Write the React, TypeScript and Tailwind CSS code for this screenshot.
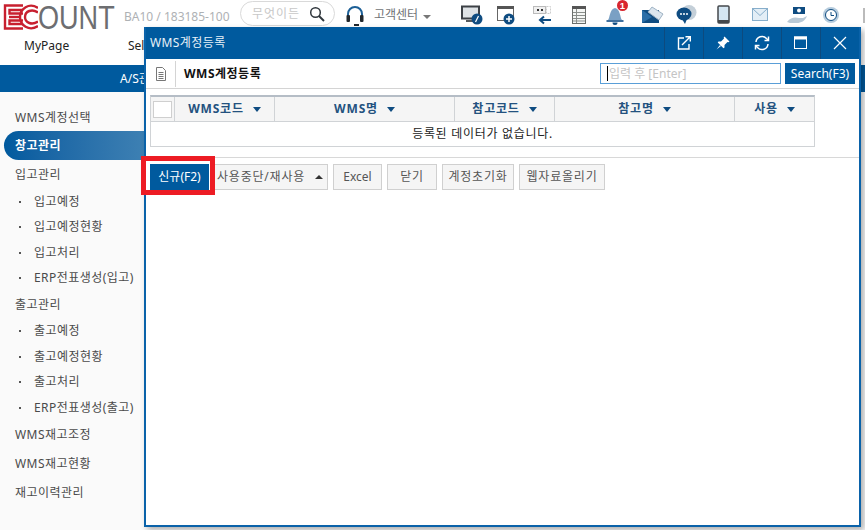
const font = "font-['Noto_Sans','Noto_Sans_CJK_KR',sans-serif]";

const menu: { label: string; kind: "top" | "active" | "head" | "sub" }[] = [
  { label: "WMS계정선택", kind: "top" },
  { label: "창고관리", kind: "active" },
  { label: "입고관리", kind: "head" },
  { label: "입고예정", kind: "sub" },
  { label: "입고예정현황", kind: "sub" },
  { label: "입고처리", kind: "sub" },
  { label: "ERP전표생성(입고)", kind: "sub" },
  { label: "출고관리", kind: "head" },
  { label: "출고예정", kind: "sub" },
  { label: "출고예정현황", kind: "sub" },
  { label: "출고처리", kind: "sub" },
  { label: "ERP전표생성(출고)", kind: "sub" },
  { label: "WMS재고조정", kind: "top" },
  { label: "WMS재고현황", kind: "top" },
  { label: "재고이력관리", kind: "top" },
];

const columns = ["WMS코드", "WMS명", "참고코드", "참고명", "사용"];
const buttons = ["Excel", "닫기", "계정초기화", "웹자료올리기"];

function Logo() {
  return (
    <div className="flex h-[30px] w-[120px] items-start">
      <svg width="38" height="30" viewBox="0 0 38 30" className="block shrink-0">
        <g fill="none" stroke="#c8202f" strokeWidth="2.400">
          <path d="M23 5.500H5V28.500H23" />
          <path d="M23 10H9.500V13.500H23" />
          <path d="M23 24H9.500V20.500H23" />
          <path d="M9 17H19" />
          <path d="M38 8C29 2 20 9 20 17S29 32 38 26" />
          <path d="M38 12.500C32 8.500 25 11 25 17S32 25.500 38 21.500" />
        </g>
      </svg>
      <span className="mt-[1px] inline-block origin-left scale-x-[0.82] font-['Liberation_Sans',sans-serif] text-[33px] leading-[33px] text-[#6d6e71]">
        OUNT
      </span>
    </div>
  );
}

function TopIcons() {
  return (
    <div className="absolute left-[460px] top-0 h-[27px] w-[405px]">
      <svg width="405" height="27" viewBox="0 0 405 27" className="block">
        {/* monitor */}
        <rect x="2" y="6.500" width="17" height="12" fill="#dfe3e6" stroke="#3d4146" strokeWidth="2" />
        <path d="M6 21H15" stroke="#55595d" strokeWidth="2" />
        <circle cx="17" cy="19" r="5.500" fill="#0f4c81" />
        <path d="M18.500 16L15.500 22" stroke="#fff" strokeWidth="1.200" />
        {/* new window */}
        <rect x="37.500" y="6.500" width="16" height="14" fill="#fff" stroke="#666" />
        <rect x="37" y="6" width="17" height="3" fill="#555" />
        <circle cx="49" cy="19" r="5.500" fill="#0f4c81" />
        <path d="M46 19H52M49 16V22" stroke="#fff" strokeWidth="1.500" />
        {/* move back */}
        <rect x="73.500" y="6.500" width="12" height="7" fill="#f0f0f0" stroke="#bbb" />
        <rect x="77" y="9" width="2" height="2" fill="#333" />
        <rect x="81" y="9" width="2" height="2" fill="#333" />
        <rect x="86.500" y="6.500" width="4" height="7" fill="#fff" stroke="#ccc" strokeDasharray="2 1" />
        <path d="M91 20H80M84 16.500L80 20L84 23.500" fill="none" stroke="#0f4c81" strokeWidth="2" />
        {/* sheet */}
        <rect x="112.500" y="6.500" width="13" height="17" fill="#f4f6f4" stroke="#6b6f6c" />
        <rect x="112" y="6" width="14" height="3" fill="#555" />
        <path d="M116.500 9V23M113 12.500H125M113 15.500H125M113 18.500H125M113 21H125" stroke="#8a8e8b" />
        {/* bell */}
        <path d="M148 20C150 18 149.500 9 155 8C160.500 9 160 18 162 20Z" fill="#7aa0c4" />
        <rect x="146.500" y="20" width="17" height="2" fill="#3f6f9d" />
        <path d="M152.500 22.500A2.500 2.500 0 0 0 157.500 22.500Z" fill="#0f4c81" />
        <circle cx="162.500" cy="5.500" r="5.500" fill="#d8262f" />
        <text x="162.500" y="9" textAnchor="middle" fontFamily="Liberation Sans" fontWeight="700" fontSize="9.500" fill="#fff">1</text>
        {/* envelope tag */}
        <path d="M182 10H199V23H182Z" fill="#0f4c81" />
        <path d="M182 10L192 17L182 23Z" fill="#2b6ea7" />
        <path d="M192 7L203 14L199 20L188 12Z" fill="#dbe5ee" stroke="#9fb3c4" />
        {/* chat */}
        <circle cx="229" cy="12.500" r="7.500" fill="#c4cfd8" />
        <ellipse cx="224" cy="14" rx="7.500" ry="6.500" fill="#0f4c81" />
        <path d="M222 19L225 24L227 19Z" fill="#0f4c81" />
        <circle cx="221" cy="14" r="1" fill="#fff" />
        <circle cx="224" cy="14" r="1" fill="#fff" />
        <circle cx="227" cy="14" r="1" fill="#fff" />
        {/* phone */}
        <rect x="258" y="6" width="11" height="17" rx="1" fill="#d5e6f2" stroke="#44484c" strokeWidth="1.500" />
        <rect x="258" y="20" width="11" height="3" fill="#44484c" />
        {/* mail */}
        <rect x="292.500" y="8.500" width="15" height="12" fill="#e3eef6" stroke="#87aecb" />
        <path d="M292.500 8.500L300 15.500L307.500 8.500" fill="none" stroke="#87aecb" />
        {/* money hand */}
        <rect x="333" y="7" width="12" height="7" fill="#0f4c81" />
        <circle cx="339" cy="10.500" r="2" fill="#fff" />
        <path d="M327 22C331 17 335 17 339 18H343L347 16C345 21 341 23 337 23H330Z" fill="#b9c9d6" />
        {/* clock */}
        <circle cx="371" cy="15" r="8" fill="#b5cbdd" />
        <circle cx="371" cy="15" r="5.500" fill="#fff" stroke="#0f4c81" />
        <path d="M371 12V15.500H374" fill="none" stroke="#0f4c81" />
        {/* cut off */}
        <rect x="403" y="8" width="2" height="15" fill="#bbb" />
      </svg>
    </div>
  );
}

function WinIcons() {
  return (
    <div className="flex h-full">
      <div className="flex w-[39px] items-center justify-center border-l border-[#0d4a7e]">
        <svg width="16" height="16" viewBox="0 0 16 16" fill="none" stroke="#fff" strokeWidth="1.400">
          <path d="M8 3H2.500V14H13V9" />
          <path d="M6 10L14 2M9.500 1.700H14.300V6.500" />
        </svg>
      </div>
      <div className="flex w-[39px] items-center justify-center border-l border-[#0d4a7e]">
        <svg width="16" height="16" viewBox="0 0 16 16" fill="#fff">
          <path d="M9.500 1.500L14.500 6.500L13.500 7.300L12.500 7L9.500 10L9.500 12.500L8.500 13.300L2.700 7.500L3.500 6.500L6 6.500L9 3.500L8.700 2.500Z" />
          <path d="M5 10L1.500 14.500L6 11Z" />
        </svg>
      </div>
      <div className="flex w-[39px] items-center justify-center border-l border-[#0d4a7e]">
        <svg width="16" height="16" viewBox="0 0 16 16" fill="none" stroke="#fff" strokeWidth="1.500">
          <path d="M2 7A6 6 0 0 1 12.500 3.500L14 5" />
          <path d="M14.500 1.500V5.500H10.500" />
          <path d="M14 9A6 6 0 0 1 3.500 12.500L2 11" />
          <path d="M1.500 14.500V10.500H5.500" />
        </svg>
      </div>
      <div className="flex w-[39px] items-center justify-center border-l border-[#0d4a7e]">
        <svg width="16" height="16" viewBox="0 0 16 16" fill="none" stroke="#fff">
          <rect x="1.500" y="2" width="12" height="11.500" strokeWidth="1" />
          <rect x="1" y="1.500" width="13" height="3" fill="#fff" stroke="none" />
        </svg>
      </div>
      <div className="flex w-[39px] items-center justify-center border-l border-[#0d4a7e]">
        <svg width="16" height="16" viewBox="0 0 16 16" fill="none" stroke="#fff" strokeWidth="1.200">
          <path d="M2 2L14 14M14 2L2 14" />
        </svg>
      </div>
    </div>
  );
}

export default function App() {
  return (
    <div className={`relative h-[530px] w-[865px] overflow-hidden bg-white ${font}`}>
      <header className="h-[27px] bg-white">
        <div className="relative h-full">
          <div className="absolute left-0 top-0">
            <Logo />
          </div>
        </div>
      </header>

      {/* header line behind the window */}
      <div className="absolute left-[124px] top-[9px] text-[12px] leading-[16px] text-[#aeb1b4]">BA10 / 183185-100</div>
      <div className="absolute left-[240px] top-[1px] flex h-[25px] w-[95px] items-center rounded-full border border-[#d9d9d9] pl-[11px] text-[12px] tracking-[1px] text-[#c8c8c8]">
        무엇이든
        <svg width="16" height="16" viewBox="0 0 16 16" fill="none" stroke="#30373d" strokeWidth="1.500" className="ml-[9px]">
          <circle cx="6.500" cy="6.500" r="4.800" />
          <path d="M10 10L15 15" strokeWidth="2" />
        </svg>
      </div>
      <svg width="20" height="22" viewBox="0 0 20 22" fill="none" className="absolute left-[345px] top-[5px]">
        <path d="M3 13V9A7 7 0 0 1 17 9V13" stroke="#1c5f96" strokeWidth="2" />
        <rect x="1.500" y="10" width="3.500" height="7" rx="1" fill="#22282d" />
        <rect x="15" y="10" width="3.500" height="7" rx="1" fill="#22282d" />
        <path d="M9 20H14" stroke="#22282d" strokeWidth="2" />
      </svg>
      <div className="absolute left-[374px] top-[7px] flex items-center text-[12px] leading-[16px] text-[#6f7376]">
        고객센터
        <span className="ml-[5px] mt-[3px] h-0 w-0 border-x-[4px] border-t-[4px] border-x-transparent border-t-[#777]" />
      </div>
      <TopIcons />

      <nav className="flex h-[38px] items-center bg-white pl-[24px] text-[12px] text-[#222]">
        <span className="w-[104px]">MyPage</span>
        <span>Self</span>
      </nav>
      <div className="flex h-[27px] items-center justify-start bg-[#005a9e] pl-[120px] text-[12px] text-white">A/S관리</div>

      <aside className="h-[438px] bg-[#fafafa] pt-[10px] text-[12px] tracking-[0.45px] text-[#4a4a4a]">
        <ul className="w-[144px]">
          {menu.map((item) => {
            if (item.kind === "active") {
              return (
                <li key={item.label} className="ml-[4px] flex h-[29px] items-center rounded-l-full bg-gradient-to-r from-[#005a9e] to-[#3d80b3] pl-[11px] font-bold text-white">
                  {item.label}
                </li>
              );
            }
            if (item.kind === "sub") {
              return (
                <li key={item.label} className="flex h-[25.500px] items-center pl-[19px] pt-[3px]">
                  <span className="mr-[13px] h-[2px] w-[2px] bg-[#555]" />
                  {item.label}
                </li>
              );
            }
            return (
              <li key={item.label} className={`flex items-center pl-[15px] ${item.kind === "head" ? "h-[27.500px] pt-[3px]" : "h-[29px] pt-[2px]"}`}>
                {item.label}
              </li>
            );
          })}
        </ul>
      </aside>

      {/* floating window */}
      <section className="absolute left-[144px] top-[27px] flex h-[500px] w-[717px] flex-col border-x-2 border-b-2 border-[#0a62a9] bg-white shadow-[3px_3px_6px_rgba(0,0,0,0.3)]">
        <div className="flex h-[32px] shrink-0 items-center justify-between bg-[#005a9e] pl-[4px] text-[12px] tracking-[0.4px] text-[#e8f1f8]">
          <span>WMS계정등록</span>
          <WinIcons />
        </div>

        <div className="flex h-[30px] shrink-0 items-center border-b border-[#d4d4d4] pr-[4px]">
          <div className="flex h-[26px] w-[30px] items-center justify-center border-r border-[#d4d4d4]">
            <svg width="12" height="14" viewBox="0 0 12 14" fill="none" stroke="#777">
              <path d="M1.500 .5H7.500L10.500 3.500V13.500H1.500Z" />
              <path d="M3.500 5.500H8.500M3.500 7.500H8.500M3.500 9.500H8.500M3.500 11.500H8.500" />
            </svg>
          </div>
          <h1 className="ml-[8px] text-[12px] font-bold leading-none tracking-[0.5px] text-[#111]">WMS계정등록</h1>
          <div className="ml-auto flex items-center gap-[4px]">
            <div className="flex h-[21px] w-[181px] items-center border border-[#5a9fd8] pl-[6px] text-[12px] text-[#c4c4c4]">
              <span className="mr-px h-[15px] w-px bg-black" />
              입력 후 [Enter]
            </div>
            <button className="h-[21px] w-[70px] bg-[#005a9e] text-center text-[12px] text-white">Search(F3)</button>
          </div>
        </div>

        <div className="ml-[4px] mt-[6px] w-[665px] border border-t-2 border-[#d0d3d6] border-t-[#b5bdc6] text-[12px]">
          <div className="grid h-[25px] grid-cols-[24px_100px_180px_100px_180px_79px] items-stretch border-b border-[#d0d3d6] bg-[#f5f5f5] font-bold text-[#24527f]">
            <div className="flex items-center justify-center border-r border-[#d0d3d6]">
              <span className="h-[17px] w-[19px] border border-[#cfcfcf] bg-white" />
            </div>
            {columns.map((col, i) => (
              <div key={col} className={`flex items-center justify-center gap-[9px] tracking-[0.8px] ${i < columns.length - 1 ? "border-r border-[#d0d3d6]" : ""}`}>
                {col}
                <span className="h-0 w-0 border-x-[4px] border-t-[5px] border-x-transparent border-t-[#0f4c81]" />
              </div>
            ))}
          </div>
          <div className="flex h-[24px] items-center justify-center tracking-[0.7px] text-[#222]">등록된 데이터가 없습니다.</div>
        </div>

        <div className="mt-[10px] flex gap-[5px] border-t border-[#d8d8d8] pl-[4px] pt-[6px] text-[12px] text-[#555]">
          <button className="h-[26px] w-[59px] bg-[#005a9e] text-white">신규(F2)</button>
          <button className="flex h-[26px] w-[114px] items-center justify-between border border-[#d0d0d0] bg-[#f5f5f5] pl-[2px] pr-[4px] tracking-[0.8px]">
            사용중단/재사용
            <span className="h-0 w-0 border-x-[4px] border-b-[4px] border-x-transparent border-b-[#333]" />
          </button>
          {buttons.map((b) => (
            <button key={b} className={`h-[26px] border border-[#d0d0d0] bg-[#f5f5f5] ${b === "Excel" ? "w-[49px]" : b === "닫기" ? "w-[50px] tracking-[0.8px]" : b === "계정초기화" ? "w-[72px] tracking-[0.8px]" : "w-[86px] tracking-[0.8px]"}`}>
              {b}
            </button>
          ))}
        </div>

        {/* red highlight around the new button */}
        <div className="absolute left-[-5px] top-[129px] h-[39px] w-[74px] border-[5px] border-[#ed1c24]" />
      </section>
    </div>
  );
}
